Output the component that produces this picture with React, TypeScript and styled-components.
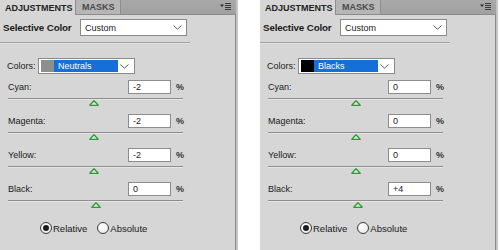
import React from 'react';
import styled, { createGlobalStyle } from 'styled-components';

const Global = createGlobalStyle`
  html, body { margin: 0; padding: 0; background: #ffffff; }
  body { font-family: "Liberation Sans", Arial, sans-serif; color: #1c1c1c; }
`;

const Page = styled.div`
  display: flex;
  gap: 22px;
  width: 500px;
  height: 250px;
  background: #ffffff;
  overflow: hidden;
`;

const Panel = styled.div`
  width: 238px;
  height: 250px;
  box-sizing: border-box;
  background: #d6d6d6;
  border-right: 2px solid #c4c4c4;
  box-shadow: inset -1px 0 0 #8a8a8a;
  display: flex;
  flex-direction: column;
`;

const Header = styled.div`
  height: 15px;
  box-sizing: border-box;
  display: flex;
  align-items: stretch;
  background: linear-gradient(#a9a9a9, #a0a0a0);
  border-bottom: 1px solid #8c8c8c;
  padding-right: 5px;
`;

const Tab = styled.div<{ $active?: boolean }>`
  display: flex;
  align-items: center;
  padding: 0 0 0 ${p => (p.$active ? 5 : 6)}px;
  width: ${p => (p.$active ? 76 : 45)}px;
  box-sizing: border-box;
  font-size: 9px;
  font-weight: bold;
  white-space: nowrap;
  color: ${p => (p.$active ? '#222' : '#4a4a4a')};
  background: ${p => (p.$active ? '#d6d6d6' : '#b6b6b6')};
  border-right: 1px solid #8e8e8e;
  margin-bottom: ${p => (p.$active ? '-1px' : '0')};
`;

const HeaderSpacer = styled.div`
  flex: 1;
`;

const MenuIcon = styled.div`
  display: flex;
  align-items: center;
`;

const Body = styled.div`
  display: flex;
  flex-direction: column;
  padding-top: 4px;
`;

const TypeRow = styled.div`
  display: flex;
  align-items: center;
  height: 17px;
  padding-left: 3px;
`;

const TypeLabel = styled.div`
  width: 77px;
  font-size: 9.8px;
  font-weight: bold;
  letter-spacing: -0.15px;
  color: #1a1a1a;
`;

const Select = styled.div<{ $w: number; $h: number }>`
  width: ${p => p.$w}px;
  height: ${p => p.$h}px;
  box-sizing: border-box;
  background: #ffffff;
  border: 1px solid #8a8a8a;
  display: flex;
  align-items: center;
  padding: 0 4px 0 4px;
  font-size: 9px;
  color: #1a1a1a;
`;

const SelectText = styled.div`
  flex: 1;
`;

const Separator = styled.div`
  width: 190px;
  height: 1px;
  margin-top: 6px;
  background: #a2a2a2;
  border-bottom: 1px solid #e2e2e2;
`;

const ColorsRow = styled.div`
  display: flex;
  align-items: center;
  height: 16px;
  margin-top: 14px;
  padding-left: 7px;
`;

const ColorsLabel = styled.div`
  width: 31px;
  font-size: 9px;
  color: #1a1a1a;
`;

const ColorSelect = styled(Select)`
  padding: 0 5px 0 2px;
`;

const Swatch = styled.div<{ $c: string }>`
  width: 13px;
  height: 12px;
  background: ${p => p.$c};
`;

const Highlight = styled.div`
  width: 64px;
  height: 12px;
  background: #1470d8;
  color: #ffffff;
  font-size: 9px;
  display: flex;
  align-items: center;
  padding-left: 4px;
  box-sizing: border-box;
  margin-right: auto;
`;

const Sliders = styled.div`
  display: flex;
  flex-direction: column;
  margin-top: 6px;
  padding-left: 8px;
`;

const SliderGroup = styled.div`
  width: 175px;
  height: 34px;
  display: flex;
  flex-direction: column;
`;

const InputRow = styled.div`
  display: flex;
  align-items: center;
  height: 14px;
`;

const SliderLabel = styled.div`
  flex: 1;
  font-size: 9px;
  color: #1a1a1a;
`;

const ValueBox = styled.div`
  width: 43px;
  height: 14px;
  box-sizing: border-box;
  background: #ffffff;
  border: 1px solid #8c8c8c;
  font-size: 9px;
  padding-left: 4px;
  display: flex;
  align-items: center;
  color: #1a1a1a;
`;

const Percent = styled.div`
  width: 7px;
  margin-left: 5px;
  font-size: 9px;
  font-weight: bold;
  color: #333;
`;

const Track = styled.div`
  position: relative;
  margin-top: 4px;
  height: 1px;
  background: #8e8e8e;
  border-bottom: 1px solid #e6e6e6;
`;

const Thumb = styled.svg`
  position: absolute;
  top: 2px;
  width: 10px;
  height: 6px;
`;

const RadioRow = styled.div`
  display: flex;
  align-items: center;
  height: 14px;
  margin-top: 5px;
  padding-left: 40px;
  gap: 10px;
`;

const RadioItem = styled.div`
  display: flex;
  align-items: center;
  gap: 1px;
  font-size: 9.5px;
  color: #1a1a1a;
`;

const RadioCircle = styled.div<{ $on?: boolean }>`
  width: 12px;
  height: 12px;
  box-sizing: border-box;
  border-radius: 50%;
  border: 1px solid #3c3c3c;
  background: radial-gradient(circle at 40% 35%, #ffffff, #e4e4e4);
  display: flex;
  align-items: center;
  justify-content: center;
  &::after {
    content: '';
    display: ${p => (p.$on ? 'block' : 'none')};
    width: 6px;
    height: 6px;
    border-radius: 50%;
    background: #1c1c1c;
  }
`;

const Chevron = () => (
  <svg width="9" height="5" viewBox="0 0 9 5">
    <path d="M0.5 0.5 L4.5 4.2 L8.5 0.5" fill="none" stroke="#5a5a5a" strokeWidth="1" />
  </svg>
);

const Menu = () => (
  <svg width="11" height="8" viewBox="0 0 11 8">
    <path d="M0 1.5 H4 L2 4 Z" fill="#2a2a2a" />
    <rect x="5" y="0" width="6" height="1" fill="#3a3a3a" />
    <rect x="5" y="2" width="6" height="1" fill="#3a3a3a" />
    <rect x="5" y="4" width="6" height="1" fill="#3a3a3a" />
    <rect x="5" y="6" width="6" height="1" fill="#3a3a3a" />
  </svg>
);

type Row = { name: string; value: number };

const fmt = (v: number) => (v > 0 ? `+${v}` : `${v}`);

const SliderRow = ({ name, value }: Row) => {
  const center = 87.5 + value * 0.7;
  return (
    <SliderGroup>
      <InputRow>
        <SliderLabel>{name}:</SliderLabel>
        <ValueBox>{fmt(value)}</ValueBox>
        <Percent>%</Percent>
      </InputRow>
      <Track>
        <Thumb viewBox="0 0 10 6" style={{ left: `${center - 5}px` }}>
          <path d="M5 0.8 L9.2 5.3 H0.8 Z" fill="#d6f0d6" stroke="#2e9a3a" strokeWidth="1.3" strokeLinejoin="round" />
        </Thumb>
      </Track>
    </SliderGroup>
  );
};

const AdjustmentsPanel = ({ color, swatch, rows }: { color: string; swatch: string; rows: Row[] }) => (
  <Panel>
    <Header>
      <Tab $active>ADJUSTMENTS</Tab>
      <Tab>MASKS</Tab>
      <HeaderSpacer />
      <MenuIcon>
        <Menu />
      </MenuIcon>
    </Header>
    <Body>
      <TypeRow>
        <TypeLabel>Selective Color</TypeLabel>
        <Select $w={107} $h={17}>
          <SelectText>Custom</SelectText>
          <Chevron />
        </Select>
      </TypeRow>
      <Separator />
      <ColorsRow>
        <ColorsLabel>Colors:</ColorsLabel>
        <ColorSelect $w={97} $h={16}>
          <Swatch $c={swatch} />
          <Highlight>{color}</Highlight>
          <Chevron />
        </ColorSelect>
      </ColorsRow>
      <Sliders>
        {rows.map(r => (
          <SliderRow key={r.name} {...r} />
        ))}
      </Sliders>
      <RadioRow>
        <RadioItem>
          <RadioCircle $on />
          Relative
        </RadioItem>
        <RadioItem>
          <RadioCircle />
          Absolute
        </RadioItem>
      </RadioRow>
    </Body>
  </Panel>
);

export default function App() {
  return (
    <>
      <Global />
      <Page>
        <AdjustmentsPanel
          color="Neutrals"
          swatch="#8e8e8e"
          rows={[
            { name: 'Cyan', value: -2 },
            { name: 'Magenta', value: -2 },
            { name: 'Yellow', value: -2 },
            { name: 'Black', value: 0 },
          ]}
        />
        <AdjustmentsPanel
          color="Blacks"
          swatch="#000000"
          rows={[
            { name: 'Cyan', value: 0 },
            { name: 'Magenta', value: 0 },
            { name: 'Yellow', value: 0 },
            { name: 'Black', value: 4 },
          ]}
        />
      </Page>
    </>
  );
}
